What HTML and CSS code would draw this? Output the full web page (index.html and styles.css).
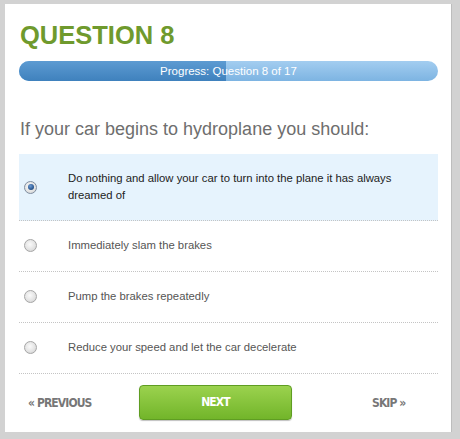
FILE: index.html
```html
<!DOCTYPE html>
<html>
<head>
<meta charset="utf-8">
<link rel="stylesheet" href="styles.css">
</head>
<body>
<div class="card">
  <h1 class="title">QUESTION 8</h1>
  <div class="progress">
    <div class="progress-fill" style="width: 49.5%"></div>
    <div class="progress-label">Progress: Question 8 of 17</div>
  </div>
  <p class="question">If your car begins to hydroplane you should:</p>
  <ul class="options">
    <li class="option selected"><span class="radio on"></span><span class="option-text">Do nothing and allow your car to turn into the plane it has always dreamed of</span></li>
    <li class="option"><span class="radio"></span><span class="option-text">Immediately slam the brakes</span></li>
    <li class="option"><span class="radio"></span><span class="option-text">Pump the brakes repeatedly</span></li>
    <li class="option"><span class="radio"></span><span class="option-text">Reduce your speed and let the car decelerate</span></li>
  </ul>
  <div class="footer">
    <a class="nav prev">« PREVIOUS</a>
    <a class="next">NEXT</a>
    <a class="nav skip">SKIP »</a>
  </div>
</div>
</body>
</html>
```
FILE: styles.css
```css
html, body {
  margin: 0;
  padding: 0;
}
body {
  background: #d2d2d2;
  padding: 4px 8px 7px 5px;
  height: 439px;
  box-sizing: border-box;
  font-family: "Liberation Sans", Arial, sans-serif;
}
.card {
  background: #fff;
  height: 428px;
  box-sizing: border-box;
  padding: 16px 13px 0 14px;
  border-right: 1px solid #bdbdbd;
}
.title {
  margin: 0;
  font-size: 25.5px;
  line-height: 30px;
  font-weight: bold;
  color: #6f9a2d;
  padding-left: 1px;
}
.progress {
  position: relative;
  margin-top: 11px;
  height: 20px;
  border-radius: 10px;
  background: linear-gradient(#a3cdf0, #7db4e2);
  overflow: hidden;
}
.progress-fill {
  height: 100%;
  background: linear-gradient(#5d9bd2, #3f81bd);
}
.progress-label {
  position: absolute;
  inset: 0;
  text-align: center;
  color: #fff;
  font-size: 11.5px;
  line-height: 20px;
}
.question {
  margin: 37px 0 14px;
  font-size: 18px;
  line-height: 22px;
  color: #6e6e6e;
  padding-left: 1px;
}
.options {
  list-style: none;
  margin: 0;
  padding: 0;
}
.option {
  display: grid;
  grid-template-columns: 49px 1fr;
  align-items: center;
  padding: 16px 40px 17px 0;
  border-bottom: 1px dotted #c4c4c4;
  font-size: 11.3px;
  line-height: 17px;
  color: #555;
}
.option.selected {
  background: #e6f3fd;
  color: #222;
  padding-bottom: 16px;
}
.radio {
  width: 11px;
  height: 11px;
  margin-left: 5px;
  border-radius: 50%;
  border: 1px solid #a6a6a6;
  background: radial-gradient(circle at 45% 40%, #fafafa 0%, #e2e2e2 60%, #c9c9c9 100%);
  position: relative;
}
.radio.on {
  border-color: #7f8da0;
}
.radio.on::after {
  content: "";
  position: absolute;
  left: 2.5px;
  top: 2.5px;
  width: 6px;
  height: 6px;
  border-radius: 50%;
  background: radial-gradient(circle at 40% 35%, #6d9bd4 0%, #2d5a93 60%, #1c3a66 100%);
}
.footer {
  display: flex;
  align-items: center;
  padding: 11px 0 0 9px;
}
.nav {
  font-family: "DejaVu Sans Condensed", "DejaVu Sans", sans-serif;
  font-stretch: condensed;
  font-weight: bold;
  font-size: 12px;
  letter-spacing: -0.9px;
  color: #777;
}
.prev {
  width: 111px;
}
.next {
  width: 153px;
  height: 35px;
  box-sizing: border-box;
  border: 1px solid #5f9d22;
  border-radius: 4px;
  background: linear-gradient(#9bd24e, #72b52a);
  color: #fff;
  text-align: center;
  line-height: 33px;
  font-family: "DejaVu Sans Condensed", "DejaVu Sans", sans-serif;
  font-stretch: condensed;
  font-weight: bold;
  font-size: 12px;
  letter-spacing: -0.9px;
  box-shadow: 0 1px 1px rgba(0,0,0,0.25);
}
.skip {
  margin-left: 80px;
}
```
